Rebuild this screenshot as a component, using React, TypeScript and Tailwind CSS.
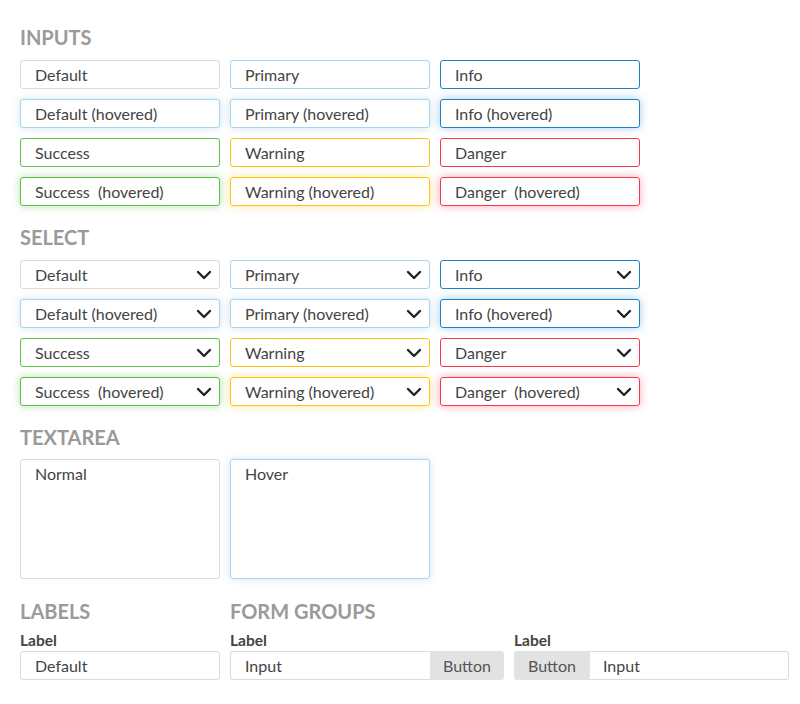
import React from "react";

type Variant = "default" | "primary" | "info" | "success" | "warning" | "danger";

const borders: Record<Variant, string> = {
  default: "border-[#dcdcdc]",
  primary: "border-[#a9d4ee]",
  info: "border-[#1f80c4]",
  success: "border-[#5ec244]",
  warning: "border-[#ffc516]",
  danger: "border-[#f53a50]",
};

const glows: Record<Variant, string> = {
  default: "border-[#a9d4ee] shadow-[0_0_8px_rgba(120,180,220,0.35)]",
  primary: "border-[#a9d4ee] shadow-[0_0_8px_rgba(120,180,220,0.35)]",
  info: "border-[#1f80c4] shadow-[0_0_8px_rgba(31,128,196,0.4)]",
  success: "border-[#5ec244] shadow-[0_0_8px_rgba(94,194,68,0.45)]",
  warning: "border-[#ffc516] shadow-[0_0_8px_rgba(255,197,22,0.45)]",
  danger: "border-[#f53a50] shadow-[0_0_8px_rgba(245,58,80,0.45)]",
};

const rows: { v: Variant; label: string; hover?: boolean }[][] = [
  [
    { v: "default", label: "Default" },
    { v: "primary", label: "Primary" },
    { v: "info", label: "Info" },
  ],
  [
    { v: "default", label: "Default (hovered)", hover: true },
    { v: "primary", label: "Primary (hovered)", hover: true },
    { v: "info", label: "Info (hovered)", hover: true },
  ],
  [
    { v: "success", label: "Success" },
    { v: "warning", label: "Warning" },
    { v: "danger", label: "Danger" },
  ],
  [
    { v: "success", label: "Success  (hovered)", hover: true },
    { v: "warning", label: "Warning (hovered)", hover: true },
    { v: "danger", label: "Danger  (hovered)", hover: true },
  ],
];

function Heading({ children }: { children: React.ReactNode }) {
  return (
    <h2 className="text-[20px] leading-[22px] font-bold text-[#9a9a9a] mb-3">
      {children}
    </h2>
  );
}

function Label() {
  return (
    <div className="text-[15.5px] leading-[16px] font-bold text-[#444] mt-[-2px] mb-[3px]">
      Label
    </div>
  );
}

function Chevron() {
  return (
    <svg width="16" height="10" viewBox="0 0 16 10" className="shrink-0">
      <path
        d="M2 2 L8 8 L14 2"
        fill="none"
        stroke="#222"
        strokeWidth="2.4"
        strokeLinecap="round"
        strokeLinejoin="round"
      />
    </svg>
  );
}

function Field({
  v,
  label,
  hover,
  select,
}: {
  v: Variant;
  label: string;
  hover?: boolean;
  select?: boolean;
}) {
  return (
    <div
      className={`w-[200px] h-[29px] flex items-center justify-between pl-[14px] pr-[7px] bg-white border rounded-[3px] ${
        hover ? glows[v] : borders[v]
      }`}
    >
      <span className="whitespace-pre text-[16px] text-[#444] pt-px">{label}</span>
      {select && <Chevron />}
    </div>
  );
}

function Grid({ select }: { select?: boolean }) {
  return (
    <div className="flex flex-col gap-[10px]">
      {rows.map((r, i) => (
        <div key={i} className="flex gap-[10px]">
          {r.map((f) => (
            <Field key={f.label} {...f} select={select} />
          ))}
        </div>
      ))}
    </div>
  );
}

export default function App() {
  return (
    <div
      className="min-h-[704px] bg-white pl-5 pt-[26px]"
      style={{ fontFamily: "Lato, 'Open Sans', sans-serif" }}
    >
      <Heading>INPUTS</Heading>
      <Grid />

      <div className="mt-5">
        <Heading>SELECT</Heading>
        <Grid select />
      </div>

      <div className="mt-5">
        <Heading>TEXTAREA</Heading>
        <div className="flex gap-[10px] -mt-px">
          <div className="w-[200px] h-[120px] border border-[#dcdcdc] rounded-[3px] pl-[14px] pt-[2px] text-[16px] text-[#444]">
            Normal
          </div>
          <div className="w-[200px] h-[120px] border border-[#a9d4ee] shadow-[0_0_8px_rgba(120,180,220,0.35)] rounded-[3px] pl-[14px] pt-[2px] text-[16px] text-[#444]">
            Hover
          </div>
        </div>
      </div>

      <div className="mt-[21px] flex gap-[10px]">
        <div>
          <Heading>LABELS</Heading>
          <Label />
          <div className="w-[200px] h-[29px] flex items-center pl-[14px] pt-px border border-[#dcdcdc] rounded-[3px] text-[16px] text-[#444]">
            Default
          </div>
        </div>
        <div>
          <Heading>FORM GROUPS</Heading>
          <div className="flex gap-[10px]">
            <div>
              <Label />
              <div className="flex h-[29px]">
                <div className="w-[200px] flex items-center pl-[14px] pt-px border border-r-0 border-[#dcdcdc] rounded-l-[3px] text-[16px] text-[#444]">
                  Input
                </div>
                <div className="w-[74px] flex items-center justify-center pt-px bg-[#e2e2e2] rounded-r-[3px] text-[16px] text-[#555]">
                  Button
                </div>
              </div>
            </div>
            <div>
              <Label />
              <div className="flex h-[29px]">
                <div className="w-[76px] flex items-center justify-center pt-px bg-[#e2e2e2] rounded-l-[3px] text-[16px] text-[#555]">
                  Button
                </div>
                <div className="w-[199px] flex items-center pl-[13px] pt-px border border-l-0 border-[#dcdcdc] rounded-r-[3px] text-[16px] text-[#444]">
                  Input
                </div>
              </div>
            </div>
          </div>
        </div>
      </div>
    </div>
  );
}
